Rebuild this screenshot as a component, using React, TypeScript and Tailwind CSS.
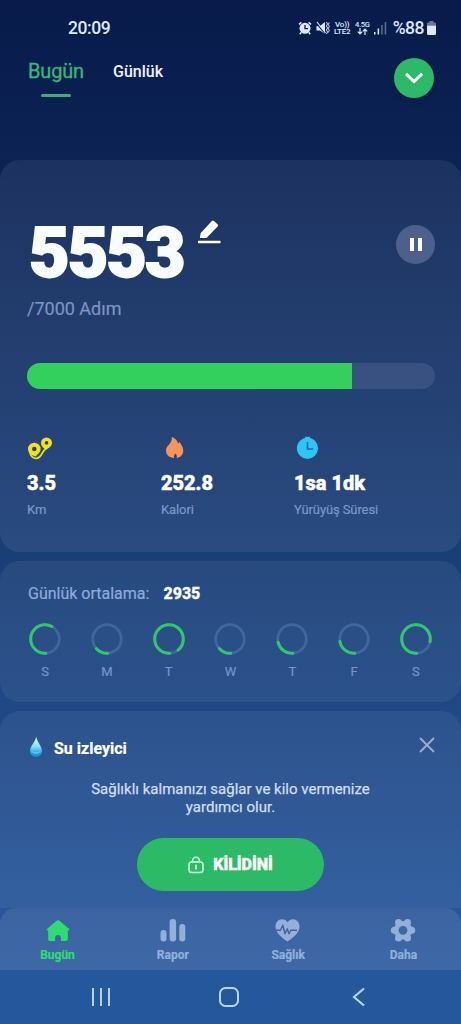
import React from 'react';

const stats = [
  { id: 'distance', value: '3.5', label: 'Km', className: 'w-[134px]' },
  { id: 'calories', value: '252.8', label: 'Kalori', className: 'w-[133px]' },
  { id: 'time', value: '1sa 1dk', label: 'Yürüyüş Süresi', className: 'w-[140px]' },
];

// progress is in percent of the circle, starting at the bottom
const days = [
  { day: 'S', progress: 59 },
  { day: 'M', progress: 14 },
  { day: 'T', progress: 90 },
  { day: 'W', progress: 14 },
  { day: 'T', progress: 22 },
  { day: 'F', progress: 23 },
  { day: 'S', progress: 79 },
];

const tabs = [
  { id: 'home', label: 'Bugün', color: 'text-[#2fdc73]' },
  { id: 'report', label: 'Rapor', color: 'text-[#93b0d8]' },
  { id: 'health', label: 'Sağlık', color: 'text-[#93b0d8]' },
  { id: 'more', label: 'Daha', color: 'text-[#93b0d8]' },
];

function StatIcon({ id }: { id: string }) {
  if (id === 'distance') {
    return (
      <svg width="26" height="24" viewBox="0 0 26 24" fill="none">
        <path d="M3 17c1.500 5.500 6.500 6.500 9.500 4s2-5 6.500-8.500" stroke="#eadb1c" strokeWidth="1.800" />
        <path d="M1 13a6.300 6.300 0 1 1 12.600 0c0 3.500-2.500 4.500-5 7.400C4 19.500 1 16.500 1 13Z" fill="#f2e21b" />
        <path d="M14 7a5.500 5.500 0 1 1 11 0c0 3-2.500 4.500-6 6.700C16.500 12.500 14 10 14 7Z" fill="#f2e21b" />
        <circle cx="7.300" cy="13" r="2.300" fill="#3b3b35" />
        <circle cx="19.500" cy="6.900" r="1.800" fill="#3b3b35" />
      </svg>
    );
  }
  if (id === 'calories') {
    return (
      <svg width="26" height="24" viewBox="0 0 26 24" fill="#fa935b">
        <path d="M10.800.8c3.800 1.800 5.700 4 6.200 6.800.6-.3 1-.8 1.300-1.500 3 3.500 5.100 7.900 3.300 12-1.200 2.300-3.100 3.700-5.900 4 .5-2-.2-3.700-1.300-4.700-1.200 1.200-1.700 2.500-1.400 4.700-4.700-.6-8-3.400-8-7.700 0-5.200 6.600-6.100 5.800-13.600Z" />
      </svg>
    );
  }
  return (
    <svg width="26" height="24" viewBox="0 0 26 24" fill="none">
      <path d="M11.100.8h4.800v3h-4.800z" fill="#2dc4f6" />
      <circle cx="13.500" cy="12.300" r="10.600" fill="#2dc4f6" />
      <path d="M13.500 6v7h5.700" stroke="#1b6aa9" strokeWidth="1.700" />
    </svg>
  );
}

function DayRing({ progress }: { progress: number }) {
  return (
    <svg width="34" height="34" viewBox="0 0 34 34" fill="none">
      <circle cx="17" cy="17" r="14.300" stroke="#41659f" strokeWidth="2.800" />
      <circle
        cx="17"
        cy="17"
        r="14.300"
        stroke="#2fc968"
        strokeWidth="3"
        strokeLinecap="round"
        pathLength="100"
        strokeDasharray={`${progress} 100`}
        transform="rotate(87 17 17)"
      />
    </svg>
  );
}

function TabIcon({ id }: { id: string }) {
  return (
    <svg width="28" height="26" viewBox="0 0 28 26" fill="currentColor">
      {id === 'home' && (
        <path d="M12.900 2.600a1.800 1.800 0 0 1 2.200 0l9.800 8.200c.9.800.5 1.700-.6 1.700h-.5v8.800c0 1-.6 1.700-1.600 1.700h-5.300v-3.500c0-1.500-1.200-2.500-2.900-2.500s-2.900 1-2.900 2.500V23H5.800c-1 0-1.600-.7-1.600-1.700v-8.800h-.5c-1 0-1.400-.9-.5-1.700z" />
      )}
      {id === 'report' && (
        <>
          <rect x="1.500" y="12" width="6" height="11.500" rx="3" />
          <rect x="10.600" y="1" width="6.500" height="22.500" rx="3.200" />
          <rect x="20.300" y="6" width="6" height="17.500" rx="3" />
        </>
      )}
      {id === 'health' && (
        <>
          <path d="M13.500 23.500C6.500 18.600 1.500 14.300 1.500 8.400c0-4 2.800-7.200 6.500-7.200 2.300 0 4.200 1 5.500 3 1.300-2 3.200-3 5.500-3 3.700 0 6.500 3.200 6.500 7.200 0 5.900-5 10.200-12 15.100Z" />
          <path d="M1.500 12.300h5l2.300-5 2.200 8.500 2.300-5 1.700 5 1.800-3.500H23" fill="none" stroke="#3e639f" strokeWidth="1.400" strokeLinejoin="round" />
        </>
      )}
      {id === 'more' && (
        <>
          <circle cx="14" cy="12.300" r="9.200" />
          <circle cx="5.300" cy="12.300" r="3.500" />
          <circle cx="22.700" cy="12.300" r="3.500" />
          <circle cx="9.500" cy="4.600" r="3.500" />
          <circle cx="18.500" cy="4.600" r="3.500" />
          <circle cx="9.500" cy="20" r="3.500" />
          <circle cx="18.500" cy="20" r="3.500" />
          <circle cx="14" cy="12.300" r="4.400" fill="#3e67a5" />
        </>
      )}
    </svg>
  );
}

function StatusBar() {
  return (
    <div className="flex h-14 items-center justify-between pl-[68px] pr-[25px] text-[#dfe8ff]">
      <span className="text-[17.500px] font-medium tracking-[-0.400px]">20:09</span>
      <div className="flex items-center">
        <svg width="14" height="14" viewBox="0 0 14 14" fill="none">
          <circle cx="7" cy="7.300" r="5.500" fill="currentColor" />
          <path d="m1 3.400 2.400-2M13 3.400l-2.400-2M3 11.500l-1.200 1.700M11 11.500l1.200 1.700" stroke="currentColor" strokeWidth="1.500" />
          <path d="M7 4v3.600h3" stroke="#0a1d4e" strokeWidth="1.300" />
        </svg>
        <svg className="ml-[4px]" width="14" height="14" viewBox="0 0 14 14" fill="none">
          <path d="M.5 5h3.500L9 1v12L4 9.500H.5z" fill="currentColor" />
          <path d="M.5 2.500 9.500 13" stroke="#0a1d4e" strokeWidth="1.200" />
          <path d="m1 1 8.500 11" stroke="currentColor" strokeWidth="1.200" />
          <path d="m10.500 1 1 2-1 2 1 2-1 2 1 2-1 2M13.200 1.500l-.8 2 .8 2-.8 2 .8 2-.8 2" stroke="currentColor" strokeWidth="1" />
        </svg>
        <div className="ml-[3px] flex w-[19px] flex-col items-center text-[8px] font-medium leading-[7.500px] tracking-[-0.200px]">
          <span>Vo))</span>
          <span>LTE2</span>
        </div>
        <div className="ml-[3px] flex w-[15px] flex-col items-center text-[7.500px] font-medium leading-[7.500px]">
          <span className="tracking-[-0.300px]">4.5G</span>
          <svg width="11" height="7" viewBox="0 0 11 7" fill="none" stroke="currentColor" strokeWidth="1.200">
            <path d="M3 0v6M.8 3.700 3 6l2.200-2.300M8 7V1M5.800 3.300 8 1l2.200 2.300" />
          </svg>
        </div>
        <svg className="ml-[4px]" width="13" height="14" viewBox="0 0 13 14" fill="currentColor">
          <rect x="0" y="11" width="1.500" height="2.500" />
          <rect x="3.600" y="7.500" width="1.500" height="6" />
          <rect x="7.200" y="4" width="1.500" height="9.500" opacity=".4" />
          <rect x="10.700" y="1" width="1.500" height="12.500" opacity=".4" />
        </svg>
        <span className="ml-[6px] text-[17.500px] font-medium tracking-[-0.500px]">%88</span>
        <svg className="ml-[3px]" width="9" height="14" viewBox="0 0 9 14" fill="currentColor">
          <path d="M2.500 0h4v1.500H8A1 1 0 0 1 9 2.500V4.500H0V2.500a1 1 0 0 1 1-1h1.500z" opacity=".45" />
          <path d="M0 4.500h9v8A1.500 1.500 0 0 1 7.500 14h-6A1.500 1.500 0 0 1 0 12.500z" />
        </svg>
      </div>
    </div>
  );
}

export default function App() {
  return (
    <div className="flex h-[1024px] w-[461px] flex-col overflow-hidden bg-[linear-gradient(180deg,#081b4b_0px,#0b2253_150px,#1a3e77_555px,#1f4885_705px,#28569a_910px,#25589e_1024px)] font-['Roboto',sans-serif]">
      <StatusBar />

      <header className="flex h-[104px] justify-between pl-7 pr-[27px]">
        <div className="flex">
          <div className="flex w-14 flex-col items-center">
            <span className="mt-[3px] text-[20px] leading-6 tracking-[-0.200px] text-[#37ba75] [-webkit-text-stroke:0.300px_#37ba75]">Bugün</span>
            <span className="mt-[11px] h-[3px] w-[30px] rounded-full bg-[#36b276]" />
          </div>
          <span className="ml-[29px] mt-[4px] text-[16px] font-medium leading-6 text-[#eef3ff]">Günlük</span>
        </div>
        <button className="mt-[2px] flex h-10 w-10 items-center justify-center rounded-full bg-[#2dba66] shadow-md">
          <svg width="20" height="12" viewBox="0 0 20 12" fill="none" stroke="white" strokeWidth="3">
            <path d="m2 1.800 8 7.700 8-7.700" />
          </svg>
        </button>
      </header>

      <section className="h-[392px] rounded-[20px] bg-white/[0.07] pl-[27px] pr-[26px] pt-[57px]">
        <div className="flex h-[70px] items-start">
          <span className="ml-[2px] mt-px text-[70px] font-black leading-[70px] tracking-[-1.900px] text-[#fafdff] [-webkit-text-stroke:1.800px_#fafdff]">
            5553
          </span>
          <svg className="ml-[13px] mt-[2px]" width="24" height="25" viewBox="0 0 24 25" fill="white">
            <path d="M3.500 14.200 14.700 2.300a1.700 1.700 0 0 1 2.500-.1l3.300 3c.7.700.7 1.600.1 2.300L9.500 19H3z" />
            <rect x="1" y="21.800" width="22.500" height="2.400" rx=".5" />
          </svg>
          <button className="ml-auto mt-[8px] flex h-[39px] w-[39px] items-center justify-center gap-1 rounded-full bg-[#4d5f8b]">
            <span className="h-[13px] w-1 bg-white" />
            <span className="h-[13px] w-1 bg-white" />
          </button>
        </div>
        <p className="mt-[10px] text-[18px] leading-6 text-[#7c95c5] [-webkit-text-stroke:0.200px_#7c95c5]">/7000 Adım</p>

        <div className="mt-[42px] h-[26px] overflow-hidden rounded-full bg-[#395180]">
          <div className="h-full bg-[#34d05c]" style={{ width: '79.600%' }} />
        </div>

        <div className="mt-[47px] flex">
          {stats.map((stat) => (
            <div key={stat.id} className={stat.className}>
              <StatIcon id={stat.id} />
              <p className="mt-[11px] text-[20px] font-extrabold leading-6 text-white [-webkit-text-stroke:0.500px_white]">{stat.value}</p>
              <p className="mt-[6px] text-[13px] leading-[18px] tracking-[-0.100px] text-[#7b97c9] [-webkit-text-stroke:0.200px_#7b97c9]">{stat.label}</p>
            </div>
          ))}
        </div>
      </section>

      <section className="mt-[9px] h-[141px] rounded-[20px] bg-white/[0.06] pl-7 pr-7 pt-[21px]">
        <div className="flex items-center leading-6">
          <span className="text-[16px] text-[#8fabde] [-webkit-text-stroke:0.200px_#8fabde]">Günlük ortalama:</span>
          <span className="ml-[14px] text-[16px] font-extrabold text-white [-webkit-text-stroke:0.300px_white]">2935</span>
        </div>
        <div className="mt-[16px] flex justify-between">
          {days.map((item, index) => (
            <div key={index} className="flex flex-col items-center">
              <DayRing progress={item.progress} />
              <span className="mt-2 text-[13px] leading-4 text-[#7895ca] [-webkit-text-stroke:0.200px_#7895ca]">{item.day}</span>
            </div>
          ))}
        </div>
      </section>

      <section className="mt-[9px] h-[197px] rounded-t-[20px] bg-white/[0.06] px-7 pt-[23px]">
        <div className="flex items-start">
          <svg className="mt-[1px]" width="16" height="24" viewBox="0 0 16 24">
            <defs>
              <linearGradient id="drop" x1="0" y1="0" x2="0" y2="1">
                <stop offset="0" stopColor="#e5fbff" />
                <stop offset=".5" stopColor="#7fe0f7" />
                <stop offset=".75" stopColor="#2daeea" />
                <stop offset="1" stopColor="#1681cd" />
              </linearGradient>
            </defs>
            <path d="M8.200 1.500C9 7 14 11 14 16a6 6 0 0 1-12 0c0-5 5.400-9 6.200-14.500Z" fill="url(#drop)" />
            <path d="M3.500 16c2 1.500 7 1.500 9 0-.4 3.300-8 3.800-9 0Z" fill="#54ccee" />
          </svg>
          <h2 className="ml-[10px] mt-[3px] text-[16px] font-bold leading-6 text-white [-webkit-text-stroke:0.200px_white]">Su izleyici</h2>
          <svg className="ml-auto mr-[-2px] mt-[3px]" width="16" height="16" viewBox="0 0 16 16" fill="none" stroke="#9caed0" strokeWidth="1.800">
            <path d="m1 1 14 14M15 1 1 15" />
          </svg>
        </div>
        <p className="mt-[20px] text-center text-[15px] leading-[17.500px] text-[#d2def7] [-webkit-text-stroke:0.250px_#d2def7]">
          Sağlıklı kalmanızı sağlar ve kilo vermenize
          <br />
          yardımcı olur.
        </p>
        <button className="mx-auto mt-[22px] flex h-[53px] w-[187px] items-center justify-center rounded-full bg-[#2dba66] text-white">
          <svg width="16" height="18" viewBox="0 0 16 18" fill="none" stroke="#d9ffe5" strokeWidth="1.500">
            <rect x="1" y="6" width="14" height="10.500" rx="2.800" />
            <path d="M4.600 6V4.800a3.400 3.400 0 0 1 6.800-.3M8 9.300v3.600" strokeLinecap="round" />
          </svg>
          <span className="ml-[9px] text-[16px] font-extrabold [-webkit-text-stroke:0.500px_white]">KİLİDİNİ</span>
        </button>
      </section>

      <nav className="flex h-[62px] justify-between rounded-t-[16px] bg-[linear-gradient(180deg,#3b64a1,#3e68a6)] pt-[10px]">
        {tabs.map((tab) => (
          <div key={tab.id} className={`flex w-[115px] flex-col items-center ${tab.color}`}>
            <TabIcon id={tab.id} />
            <span className="mt-[3px] text-[12px] font-bold leading-4 [-webkit-text-stroke:0.200px_currentColor]">{tab.label}</span>
          </div>
        ))}
      </nav>

      <div className="flex h-[54px] items-center bg-[#25579c] pl-[92px] text-[#bcd7fa]">
        <svg width="18" height="20" viewBox="0 0 18 20" fill="none" stroke="currentColor" strokeWidth="1.900">
          <path d="M1 1v18M9 1v18M17 1v18" />
        </svg>
        <svg className="ml-[108px]" width="22" height="22" viewBox="0 0 22 22" fill="none" stroke="currentColor" strokeWidth="2">
          <rect x="2" y="2" width="18" height="18" rx="5.500" />
        </svg>
        <svg className="ml-[112px]" width="14" height="20" viewBox="0 0 14 20" fill="none" stroke="currentColor" strokeWidth="2.100">
          <path d="m12 1.500-10 8.500 10 8.500" />
        </svg>
      </div>
    </div>
  );
}
